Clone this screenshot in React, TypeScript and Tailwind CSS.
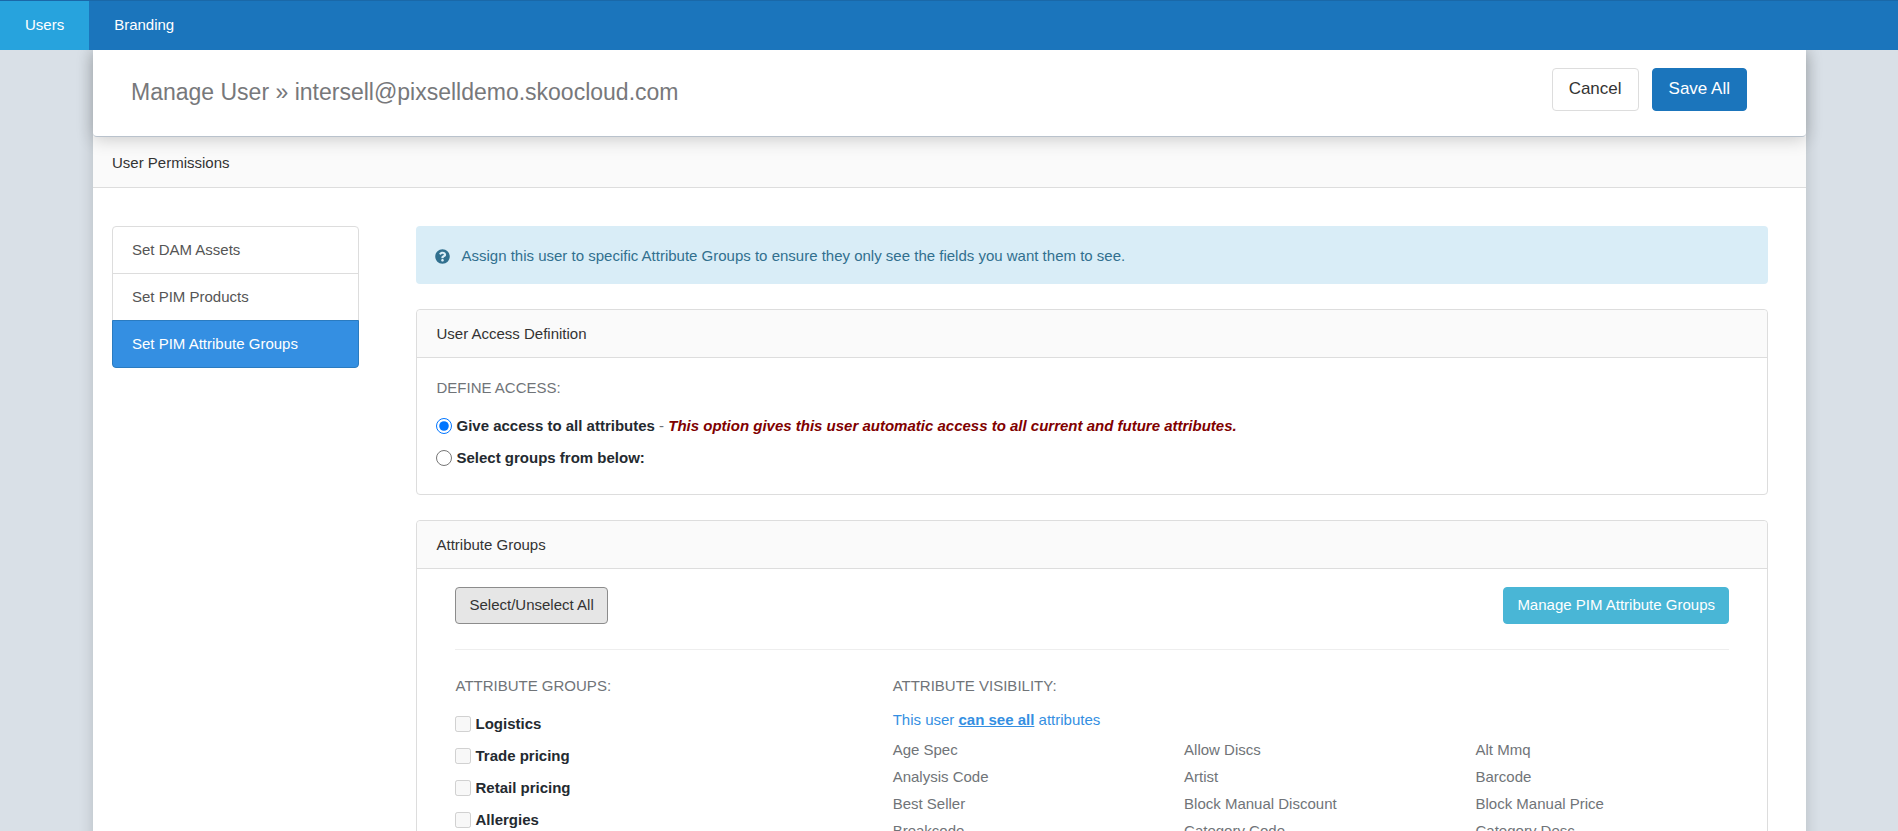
/**
 * Manage user page
 * Attribute group permissions for a single user
 */
import { useState } from 'react';
import { FaQuestionCircle } from 'react-icons/fa';

const NAV_ITEMS = ['Users', 'Branding'];

const SECTIONS = ['Set DAM Assets', 'Set PIM Products', 'Set PIM Attribute Groups'];

const GROUPS = ['Logistics', 'Trade pricing', 'Retail pricing', 'Allergies'];

const ATTRIBUTES = [
  'Age Spec',
  'Allow Discs',
  'Alt Mmq',
  'Analysis Code',
  'Artist',
  'Barcode',
  'Best Seller',
  'Block Manual Discount',
  'Block Manual Price',
  'Breakcode',
  'Category Code',
  'Category Desc',
];

interface PanelProps {
  title: string;
  children: React.ReactNode;
}

function Panel({ title, children }: PanelProps) {
  return (
    <section className="mb-[25px] rounded border border-[#ddd]">
      <h2 className="rounded-t border-b border-[#ddd] bg-[#fafafa] px-[19px] py-3 leading-[23px] text-[#333]">
        {title}
      </h2>
      {children}
    </section>
  );
}

function TopNav() {
  return (
    <nav className="relative z-20 flex border-t border-[#1a68a8] bg-[#1b75bc] text-white">
      {NAV_ITEMS.map((item) => (
        <a
          key={item}
          href="#"
          className={`px-[25px] pt-3 pb-[14px] leading-[23px] ${item === 'Users' ? 'bg-[#27a3dd]' : ''}`}
        >
          {item}
        </a>
      ))}
    </nav>
  );
}

function PageHeader() {
  return (
    <header className="relative z-10 flex items-start justify-between rounded-b border-b border-[#b9c2cc] bg-white pt-[18px] pr-[59px] pb-[25px] pl-[38px] shadow-[0_2px_18px_rgba(0,0,0,0.2)]">
      <h1 className="pt-2 text-[23px] leading-8 text-[#77787b]">
        Manage User » intersell@pixselldemo.skoocloud.com
      </h1>
      <div className="flex gap-[13px] text-[17px] leading-[23px]">
        <button type="button" className="rounded border border-[#ddd] bg-white px-4 pt-2 pb-[10px] text-[#333]">
          Cancel
        </button>
        <button type="button" className="rounded border border-[#1b75bc] bg-[#1b75bc] px-4 pt-2 pb-[10px] text-white">
          Save All
        </button>
      </div>
    </header>
  );
}

export default function App() {
  const [access, setAccess] = useState('all');

  return (
    <div className="flex min-h-screen flex-col bg-[#d9e0e7] font-['Liberation_Sans',Arial,sans-serif] text-[15px] leading-[23px] text-[#707478]">
      <TopNav />
      <main className="mr-[92px] ml-[93px] grow bg-white shadow-[0_0_14px_rgba(0,0,0,0.16)]">
        <PageHeader />
        <h2 className="border-b border-[#ddd] bg-[#fafafa] px-[19px] pt-[14px] pb-[13px] text-[#333]">
          User Permissions
        </h2>

        <div className="flex pt-[38px]">
          {/* Section list */}
          <aside className="w-1/6 px-[19px]">
            <ul>
              {SECTIONS.map((section) => (
                <li key={section} className="group -mb-px">
                  <a
                    href="#"
                    className={`block border px-[19px] py-3 leading-[22px] group-first:rounded-t group-last:rounded-b ${
                      section === 'Set PIM Attribute Groups'
                        ? 'relative border-[#2a7bc0] bg-[#348fe2] text-white'
                        : 'border-[#ddd] text-[#555]'
                    }`}
                  >
                    {section}
                  </a>
                </li>
              ))}
            </ul>
          </aside>

          <div className="w-5/6 px-[38px]">
            <div className="mb-[25px] flex items-center gap-[11px] rounded bg-[#d9edf7] px-[19px] pt-[19px] pb-[17px] leading-[22px] text-[#31708f]">
              <FaQuestionCircle className="size-[15px]" />
              <p>
                Assign this user to specific Attribute Groups to ensure they only see the fields you want them to see.
              </p>
            </div>

            <Panel title="User Access Definition">
              <div className="px-[19px] pt-[18px] pb-4">
                <h3 className="mb-[15px]">DEFINE ACCESS:</h3>
                <div className="mb-[9px] flex items-center gap-1">
                  <input
                    type="radio"
                    id="access_all"
                    name="access"
                    checked={access === 'all'}
                    onChange={() => setAccess('all')}
                    className="size-4"
                  />
                  <label htmlFor="access_all">
                    <span className="font-bold text-[#242a30]">Give access to all attributes</span> -{' '}
                    <em className="font-bold text-[#800000]">
                      This option gives this user automatic access to all current and future attributes.
                    </em>
                  </label>
                </div>
                <div className="mb-[9px] flex items-center gap-1">
                  <input
                    type="radio"
                    id="access_groups"
                    name="access"
                    checked={access === 'groups'}
                    onChange={() => setAccess('groups')}
                    className="size-4"
                  />
                  <label htmlFor="access_groups" className="font-bold text-[#242a30]">
                    Select groups from below:
                  </label>
                </div>
              </div>
            </Panel>

            <Panel title="Attribute Groups">
              <div className="px-[38px] pt-[18px]">
                <div className="mb-[25px] flex justify-between">
                  <button
                    type="button"
                    className="rounded border border-[#8c8c8c] bg-[#e6e6e6] px-[13px] pt-[5px] pb-[7px] text-[#333]"
                  >
                    Select/Unselect All
                  </button>
                  <button
                    type="button"
                    className="rounded border border-[#49b6d6] bg-[#49b6d6] px-[13px] pt-[5px] pb-[7px] text-white"
                  >
                    Manage PIM Attribute Groups
                  </button>
                </div>
                <hr className="border-[#eee]" />

                <div className="-mx-[19px] flex pt-6">
                  <div className="w-1/3 px-[19px]">
                    <h3 className="mb-[15px]">ATTRIBUTE GROUPS:</h3>
                    {GROUPS.map((group) => (
                      <div key={group} className="mb-[9px] flex items-center gap-1">
                        <input
                          type="checkbox"
                          id={`group_${group}`}
                          disabled={access === 'all'}
                          className="size-4"
                        />
                        <label htmlFor={`group_${group}`} className="font-bold text-[#242a30]">
                          {group}
                        </label>
                      </div>
                    ))}
                  </div>

                  <div className="w-2/3 pl-[19px]">
                    <h3 className="mb-[11px]">ATTRIBUTE VISIBILITY:</h3>
                    <p className="mb-[5px] text-[#348fe2]">
                      This user <strong className="underline">can see all</strong> attributes
                    </p>
                    <ul className="-mr-[19px] grid grid-cols-3 leading-[27px]">
                      {ATTRIBUTES.map((attribute) => (
                        <li key={attribute}>{attribute}</li>
                      ))}
                    </ul>
                  </div>
                </div>
              </div>
            </Panel>
          </div>
        </div>
      </main>
    </div>
  );
}
